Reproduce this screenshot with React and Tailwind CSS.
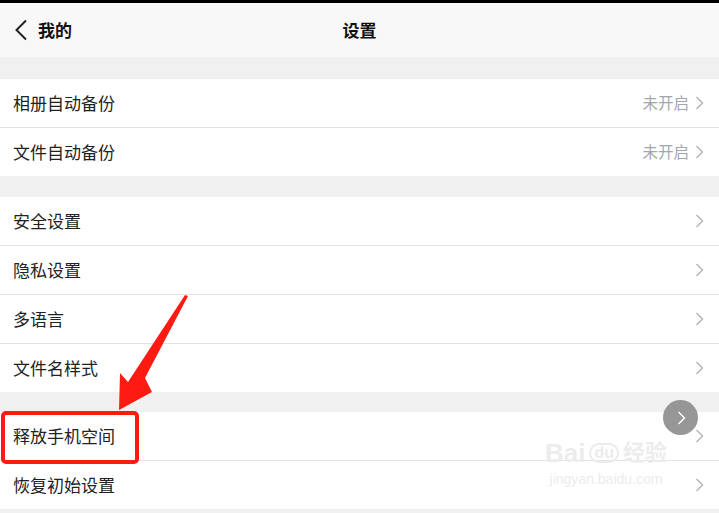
const Chevron = ({ className = '' }) => (
  <svg width="10" height="16" viewBox="0 0 10 16" className={className}>
    <path d="M2.5 2 L8.5 8 L2.5 14" fill="none" stroke="currentColor" strokeWidth="1.4" />
  </svg>
);

const Row = ({ label, value, last }) => (
  <div className={`flex items-center bg-white pl-[13px] pr-[15px] ${last ? 'h-[48px]' : 'h-[49px] border-b border-[#e3e3e3]'}`}>
    <span className="flex-1 text-[17px] text-[#222]">{label}</span>
    {value && <span className="text-[15.5px] text-[#a3a7ad] mr-[5px]">{value}</span>}
    <Chevron className="text-[#b3b3b3]" />
  </div>
);

const groups = [
  [
    { label: '相册自动备份', value: '未开启' },
    { label: '文件自动备份', value: '未开启' },
  ],
  [
    { label: '安全设置' },
    { label: '隐私设置' },
    { label: '多语言' },
    { label: '文件名样式' },
  ],
  [
    { label: '释放手机空间' },
    { label: '恢复初始设置' },
  ],
];

const App = () => {
  return (
    <div
      className="relative w-[719px] h-[513px] overflow-hidden bg-[#f0f0f0]"
      style={{ fontFamily: '"Noto Sans CJK SC", "Noto Sans", sans-serif' }}
    >
      <div className="h-[3px] bg-black" />
      {/* Header */}
      <div className="relative flex items-center h-[54px] bg-[#f8f8f8] px-[14px]">
        <svg width="14" height="22" viewBox="0 0 14 22" className="text-[#222]">
          <path d="M12 1.5 L2.5 11 L12 20.5" fill="none" stroke="currentColor" strokeWidth="2" />
        </svg>
        <span className="ml-[10px] text-[17px] font-bold text-[#111]">我的</span>
        <span className="absolute left-0 right-0 text-center text-[17px] font-bold text-[#111] pointer-events-none">设置</span>
      </div>

      <div className="flex flex-col">
        {groups.map((g, gi) => (
          <div key={gi} className={gi === 0 ? 'mt-[22px]' : gi === 1 ? 'mt-[21px]' : 'mt-[20px]'}>
            {g.map((r, i) => (
              <Row key={r.label} label={r.label} value={r.value} last={i === g.length - 1} />
            ))}
          </div>
        ))}
      </div>

      {/* red highlight box */}
      <div className="absolute left-[1px] top-[411px] w-[138px] h-[53px] border-[4px] border-[#ff1a12] rounded-[5px]" />

      {/* red arrow */}
      <svg className="absolute left-0 top-0" width="719" height="513" viewBox="0 0 719 513">
        <polygon
          points="188,296 145,378 152,392 119,410 120,373 128,382 185,295"
          fill="#ff1a12"
        />
      </svg>

      {/* floating gray button */}
      <div className="absolute left-[663px] top-[400px] w-[35px] h-[35px] rounded-full bg-[#8c8c8c]/90 flex items-center justify-center">
        <Chevron className="text-white" />
      </div>

      {/* watermark */}
      <div className="absolute left-[545px] top-[440px] flex flex-col items-center text-[#ececec] pointer-events-none select-none">
        <div className="flex items-center gap-[4px] text-[26px] font-bold leading-none" style={{ fontFamily: '"Liberation Sans", "Noto Sans CJK SC", sans-serif' }}>
          <span>Bai</span>
          <span className="rounded-full border-2 border-[#ececec] px-[3px] text-[16px]">du</span>
          <span className="text-[22px]">经验</span>
        </div>
        <div className="text-[14px] leading-none mt-[6px]" style={{ fontFamily: '"Liberation Sans", sans-serif' }}>jingyan.baidu.com</div>
      </div>
    </div>
  );
};

export default App;
